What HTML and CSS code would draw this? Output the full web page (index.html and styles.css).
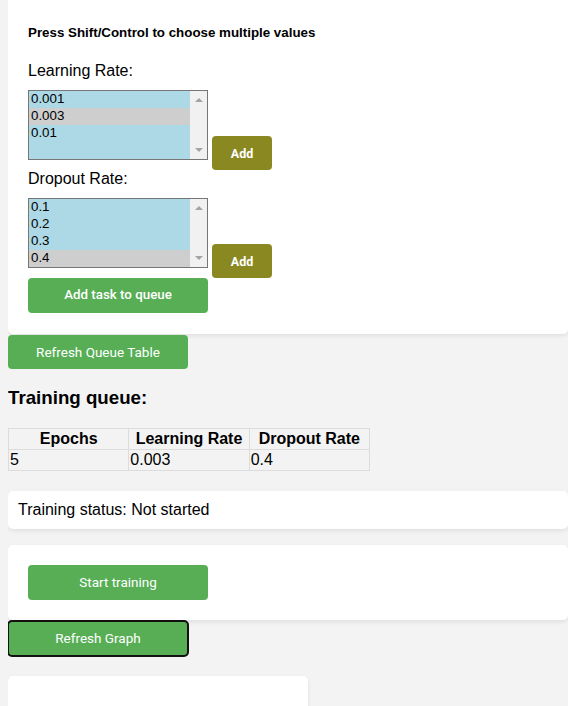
FILE: index.html
```html
<!DOCTYPE html>
<html lang="en">
<head>
<meta charset="utf-8">
<title>Training queue</title>
<link rel="stylesheet" href="styles.css">
</head>
<body>
  <div class="card controls">
    <h5 class="hint">Press Shift/Control to choose multiple values</h5>

    <label class="field-label" for="lr">Learning Rate:</label>
    <div class="select-row">
      <div class="listbox">
        <select id="lr" class="multi" multiple size="4">
          <option>0.001</option>
          <option selected>0.003</option>
          <option>0.01</option>
        </select>
        <div class="scrollbar" aria-hidden="true"><span class="arrow up"></span><span class="arrow down"></span></div>
      </div>
      <button class="btn-add">Add</button>
    </div>

    <label class="field-label" for="dr">Dropout Rate:</label>
    <div class="select-row">
      <div class="listbox">
        <select id="dr" class="multi" multiple size="4">
          <option>0.1</option>
          <option>0.2</option>
          <option>0.3</option>
          <option selected>0.4</option>
        </select>
        <div class="scrollbar" aria-hidden="true"><span class="arrow up"></span><span class="arrow down"></span></div>
      </div>
      <button class="btn-add">Add</button>
    </div>

    <button class="btn btn-green btn-strong">Add task to queue</button>
  </div>

  <button class="btn btn-green btn-gap">Refresh Queue Table</button>

  <h3 class="section-title">Training queue:</h3>
  <table class="queue">
    <thead>
      <tr><th>Epochs</th><th>Learning Rate</th><th>Dropout Rate</th></tr>
    </thead>
    <tbody>
      <tr><td>5</td><td>0.003</td><td>0.4</td></tr>
    </tbody>
  </table>

  <div class="card status">Training status: Not started</div>

  <div class="card actions">
    <button class="btn btn-green">Start training</button>
  </div>

  <button class="btn btn-green btn-gap btn-focused">Refresh Graph</button>

  <div class="card graph"></div>
</body>
</html>
```
FILE: styles.css
```css
html {
  overflow: hidden;
}

body {
  margin: 0 0 0 8px;
  background: #f3f3f3;
  font-family: "Liberation Sans", Arial, sans-serif;
  font-size: 16px;
  color: #000;
}

.card {
  background: #fff;
  border-radius: 5px;
  box-shadow: 0 2px 4px rgba(0, 0, 0, 0.08);
}

.controls {
  padding: 25px 20px 21px;
  border-radius: 0 0 5px 5px;
}

.hint {
  margin: 0 0 22px;
  font-size: 13.33px;
  font-weight: bold;
}

.field-label {
  display: block;
  margin-bottom: 10px;
}

.select-row {
  display: flex;
  align-items: flex-start;
  gap: 4px;
}

.listbox {
  display: flex;
  width: 180px;
  height: 70px;
  box-sizing: border-box;
  border: 1px solid #767676;
  background: #add8e6;
}

.multi {
  flex: 1;
  min-width: 0;
  height: 68px;
  margin: 0;
  padding: 0;
  border: none;
  background: #add8e6;
  font-family: "Liberation Sans", Arial, sans-serif;
  font-size: 13.33px;
  color: #000;
  overflow: hidden;
  outline: none;
}

.multi option {
  padding: 0 2px 1px;
}

.multi option:checked {
  background: #cecece linear-gradient(#cecece, #cecece);
  color: #000;
}

.scrollbar {
  width: 17px;
  flex: none;
  box-sizing: border-box;
  padding: 7px 0;
  background: #f1f1f1;
  display: flex;
  flex-direction: column;
  justify-content: space-between;
  align-items: center;
}

.arrow {
  width: 0;
  height: 0;
  border-left: 4px solid transparent;
  border-right: 4px solid transparent;
}

.arrow.up {
  border-bottom: 4px solid #a3a3a3;
}

.arrow.down {
  border-top: 4px solid #a3a3a3;
}

.btn-add {
  margin-top: 46px;
  width: 60px;
  height: 34px;
  border: none;
  border-radius: 4px;
  background: #8a8820;
  color: #fff;
  font-family: Roboto, "Liberation Sans", Arial, sans-serif;
  font-size: 12.5px;
  font-weight: bold;
}

.btn {
  display: block;
  width: 180px;
  margin: 0;
  padding: 10px 0;
  border: none;
  border-radius: 4px;
  font-family: Roboto, "Liberation Sans", Arial, sans-serif;
  font-size: 13.5px;
  line-height: 14.67px;
  text-align: center;
}

.btn-green {
  background: #57ae55;
  color: #fff;
}

.btn-strong {
  font-weight: 500;
  font-size: 13.33px;
}

.btn-gap {
  margin-top: 1px;
}

.btn-focused {
  outline: 2px solid #111;
  outline-offset: -1px;
}

.section-title {
  margin: 18px 0 19px;
  font-size: 18.72px;
  font-weight: bold;
}

.queue {
  width: 362px;
  table-layout: fixed;
  border-collapse: collapse;
  font-size: 16px;
}

.queue th,
.queue td {
  border: 1px solid #dcdcdc;
  padding: 1px 1px;
}

.queue th {
  text-align: center;
  font-weight: bold;
}

.queue td {
  text-align: left;
}

.status {
  margin-top: 20px;
  padding: 10px;
}

.actions {
  margin-top: 16px;
  padding: 20px;
}

.graph {
  width: 300px;
  height: 120px;
  margin-top: 20px;
}
```
